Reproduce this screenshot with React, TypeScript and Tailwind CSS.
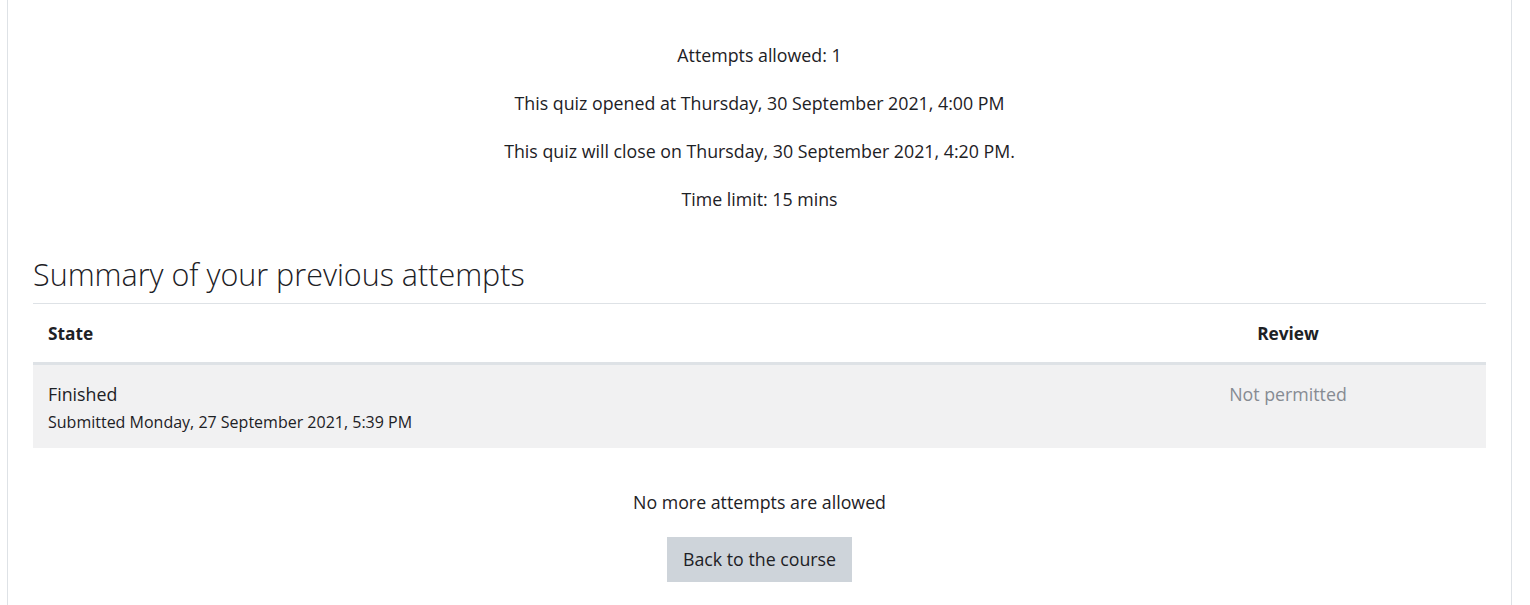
export default function App() {
  const info = [
    "Attempts allowed: 1",
    "This quiz opened at Thursday, 30 September 2021, 4:00 PM",
    "This quiz will close on Thursday, 30 September 2021, 4:20 PM.",
    "Time limit: 15 mins",
  ];
  return (
    <div
      className="min-h-screen bg-white text-[#1d2125]"
      style={{ fontFamily: '"Open Sans", "Noto Sans", sans-serif' }}
    >
      <div className="ml-[7px] w-[1505px] border-x border-[#dee2e6] px-[25px] pt-[42px] pb-[23px]">
        <div className="flex flex-col items-center text-[17.8px]">
          {info.map((line) => (
            <p key={line} className="mb-[22px] h-[26px] leading-[26px]">
              {line}
            </p>
          ))}
        </div>

        <h2 className="mt-[20px] mb-[9px] text-[30.5px] font-light leading-[40px] text-[#1d2125]">
          Summary of your previous attempts
        </h2>

        <div className="border-t border-[#dee2e6]">
          <div className="grid grid-cols-[1fr_396px] border-b-[3px] border-[#dee2e6] text-[17.3px] font-bold">
            <div className="h-[58px] px-[15px] pt-[1px] leading-[58px]">State</div>
            <div className="h-[58px] pt-[1px] text-center leading-[58px]">Review</div>
          </div>
          <div className="grid h-[83px] grid-cols-[1fr_396px] bg-[#f1f1f2] pt-[16px]">
            <div className="px-[15px]">
              <div className="h-[26px] text-[17.8px] leading-[26px]">Finished</div>
              <div className="mt-[3px] text-[16px] leading-[24px]">
                Submitted Monday, 27 September 2021, 5:39 PM
              </div>
            </div>
            <div className="h-[26px] text-center text-[17.8px] leading-[26px] text-[#868b92]">
              Not permitted
            </div>
          </div>
        </div>

        <div className="mt-[41px] flex flex-col items-center">
          <p className="h-[26px] text-[17.8px] leading-[26px]">No more attempts are allowed</p>
          <button className="mt-[22px] h-[45px] bg-[#ced4da] px-[16px] text-[17.8px] text-[#1d2125]">
            Back to the course
          </button>
        </div>
      </div>
    </div>
  );
}
